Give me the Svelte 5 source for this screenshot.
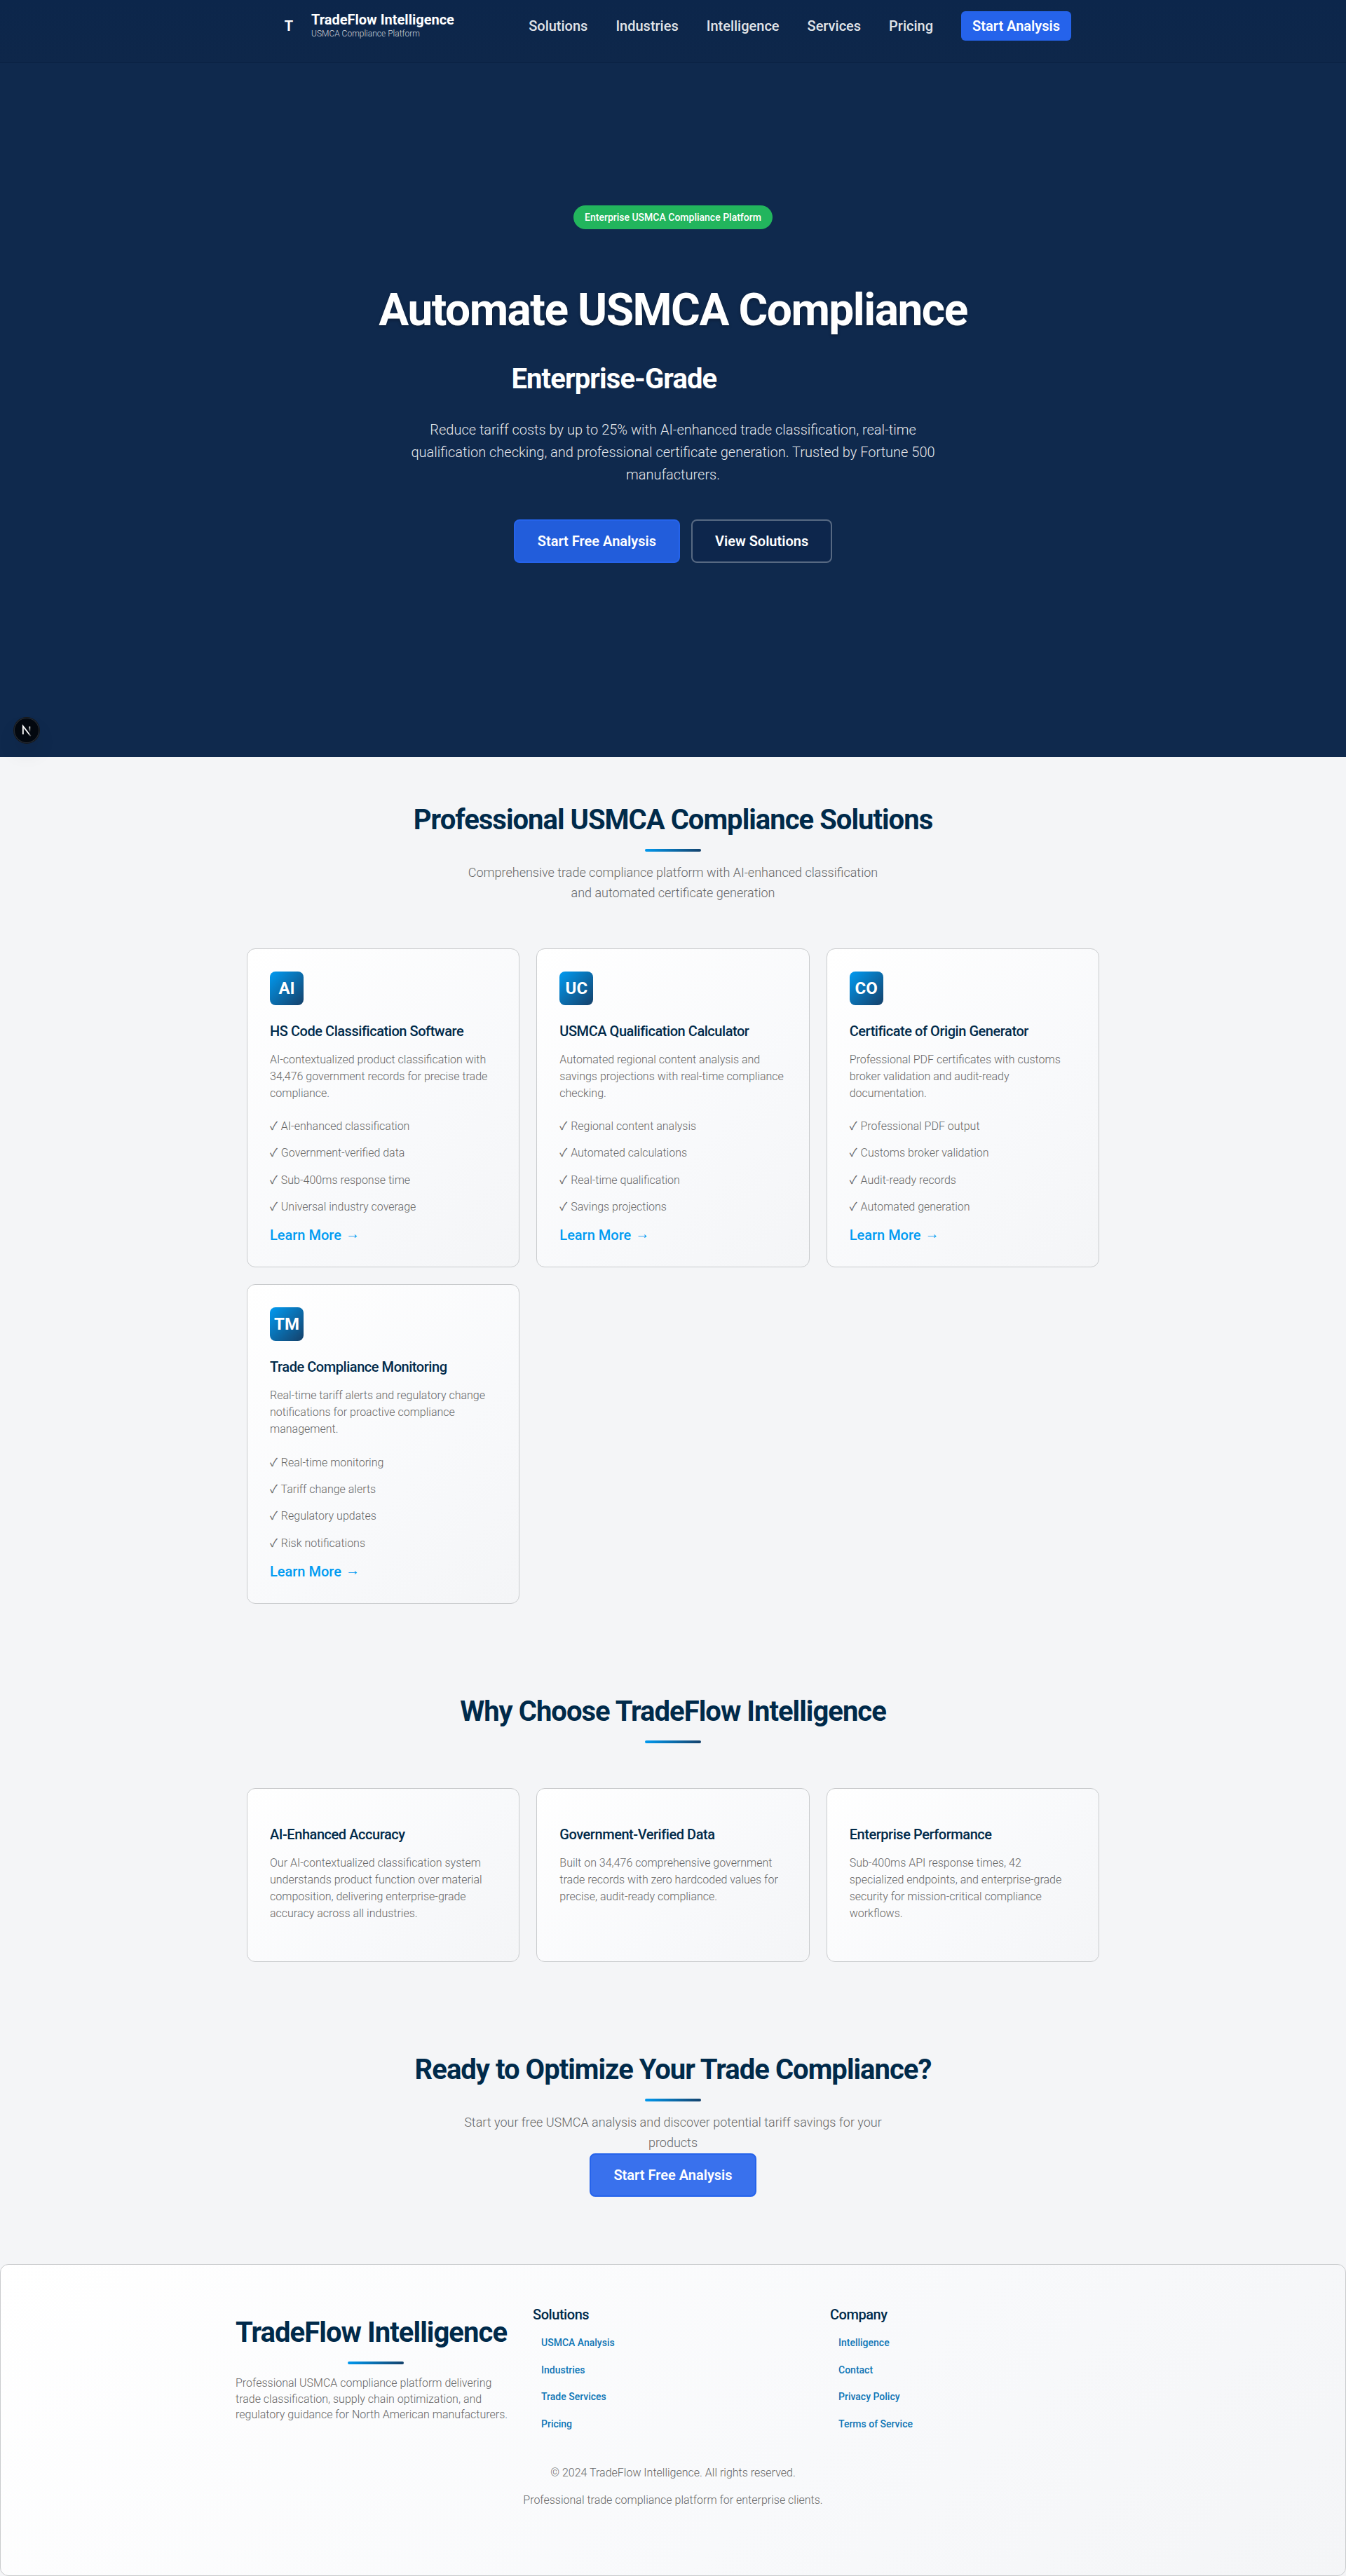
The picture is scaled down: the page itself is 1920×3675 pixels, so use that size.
<script>
  const nav = ['Solutions', 'Industries', 'Intelligence', 'Services', 'Pricing'];

  const solutions = [
    {
      icon: 'AI',
      title: 'HS Code Classification Software',
      text: 'AI-contextualized product classification with 34,476 government records for precise trade compliance.',
      items: ['AI-enhanced classification', 'Government-verified data', 'Sub-400ms response time', 'Universal industry coverage']
    },
    {
      icon: 'UC',
      title: 'USMCA Qualification Calculator',
      text: 'Automated regional content analysis and savings projections with real-time compliance checking.',
      items: ['Regional content analysis', 'Automated calculations', 'Real-time qualification', 'Savings projections']
    },
    {
      icon: 'CO',
      title: 'Certificate of Origin Generator',
      text: 'Professional PDF certificates with customs broker validation and audit-ready documentation.',
      items: ['Professional PDF output', 'Customs broker validation', 'Audit-ready records', 'Automated generation']
    },
    {
      icon: 'TM',
      title: 'Trade Compliance Monitoring',
      text: 'Real-time tariff alerts and regulatory change notifications for proactive compliance management.',
      items: ['Real-time monitoring', 'Tariff change alerts', 'Regulatory updates', 'Risk notifications']
    }
  ];

  const reasons = [
    {
      title: 'AI-Enhanced Accuracy',
      text: 'Our AI-contextualized classification system understands product function over material composition, delivering enterprise-grade accuracy across all industries.'
    },
    {
      title: 'Government-Verified Data',
      text: 'Built on 34,476 comprehensive government trade records with zero hardcoded values for precise, audit-ready compliance.'
    },
    {
      title: 'Enterprise Performance',
      text: 'Sub-400ms API response times, 42 specialized endpoints, and enterprise-grade security for mission-critical compliance workflows.'
    }
  ];

  const footerLinks = [
    { title: 'Solutions', links: ['USMCA Analysis', 'Industries', 'Trade Services', 'Pricing'] },
    { title: 'Company', links: ['Intelligence', 'Contact', 'Privacy Policy', 'Terms of Service'] }
  ];
</script>

<div class="page">
  <div class="top">
    <header class="header">
      <div class="header-inner">
        <a class="logo" href="#top">
          <span class="logo-mark">T</span>
          <span class="logo-text">
            <span class="logo-name">TradeFlow Intelligence</span>
            <span class="logo-sub">USMCA Compliance Platform</span>
          </span>
        </a>
        <nav class="nav">
          {#each nav as item}
            <a class="nav-link" href="#top">{item}</a>
          {/each}
          <a class="nav-cta" href="#top">Start Analysis</a>
        </nav>
      </div>
    </header>

    <section class="hero">
      <div class="badge">Enterprise USMCA Compliance Platform</div>
      <h1>Automate USMCA Compliance</h1>
      <h2 class="hero-sub">Enterprise-Grade</h2>
      <p>
        Reduce tariff costs by up to 25% with AI-enhanced trade classification, real-time qualification checking, and
        professional certificate generation. Trusted by Fortune 500 manufacturers.
      </p>
      <div class="actions">
        <a class="btn primary" href="#top">Start Free Analysis</a>
        <a class="btn outline" href="#top">View Solutions</a>
      </div>
    </section>

    <div class="dev-badge">
      <svg width="36" height="36" viewBox="0 0 36 36" fill="none">
        <defs>
          <linearGradient id="diag" gradientUnits="userSpaceOnUse" x1="9.96" y1="11.12" x2="15.48" y2="17.97">
            <stop stop-color="#fff" />
            <stop offset="0.6" stop-color="#fff" stop-opacity="0.2" />
            <stop offset="1" stop-color="#fff" stop-opacity="0" />
          </linearGradient>
          <linearGradient id="stem" gradientUnits="userSpaceOnUse" x1="11.82" y1="1.4" x2="11.79" y2="9.63">
            <stop stop-color="#fff" />
            <stop offset="1" stop-color="#fff" stop-opacity="0" />
          </linearGradient>
        </defs>
        <g transform="translate(10.5 11)" stroke-width="1.86">
          <path d="M13.3 15.2 L2.34 1 V12.6" stroke="url(#diag)" />
          <path d="M11.825 1.5 V13.1" stroke="url(#stem)" />
        </g>
      </svg>
    </div>
  </div>

  <section class="section">
    <h2 class="heading">Professional USMCA Compliance Solutions</h2>
    <p class="lead">Comprehensive trade compliance platform with AI-enhanced classification and automated certificate generation</p>
    <div class="grid">
      {#each solutions as s}
        <article class="card">
          <div class="icon">{s.icon}</div>
          <h3>{s.title}</h3>
          <p>{s.text}</p>
          <ul>
            {#each s.items as item}
              <li><span class="check">✓</span> {item}</li>
            {/each}
          </ul>
          <a class="more" href="#top">Learn More <span class="arrow">→</span></a>
        </article>
      {/each}
    </div>
  </section>

  <section class="section">
    <h2 class="heading">Why Choose TradeFlow Intelligence</h2>
    <div class="grid">
      {#each reasons as r}
        <article class="card plain">
          <h3>{r.title}</h3>
          <p>{r.text}</p>
        </article>
      {/each}
    </div>
  </section>

  <section class="section cta">
    <h2 class="heading">Ready to Optimize Your Trade Compliance?</h2>
    <p class="lead">Start your free USMCA analysis and discover potential tariff savings for your products</p>
    <a class="btn primary" href="#top">Start Free Analysis</a>
  </section>

  <footer class="footer">
    <div class="footer-grid">
      <div class="about">
        <h2 class="heading">TradeFlow Intelligence</h2>
        <p>
          Professional USMCA compliance platform delivering trade classification, supply chain optimization, and
          regulatory guidance for North American manufacturers.
        </p>
      </div>
      {#each footerLinks as col}
        <div class="links">
          <h4>{col.title}</h4>
          <ul>
            {#each col.links as link}
              <li><a href="#top">{link}</a></li>
            {/each}
          </ul>
        </div>
      {/each}
    </div>
    <div class="legal">
      <p>© 2024 TradeFlow Intelligence. All rights reserved.</p>
      <p>Professional trade compliance platform for enterprise clients.</p>
    </div>
  </footer>
</div>

<style>
  :global(body) {
    margin: 0;
    background: #f4f5f7;
  }

  .page {
    font-family: Roboto, sans-serif;
    font-weight: 300;
    font-size: 16px;
    color: #666;
  }

  .page :is(h1, h2, h3, h4, p, ul) {
    margin: 0;
    padding: 0;
  }

  ul {
    list-style: none;
  }

  a {
    text-decoration: none;
    color: inherit;
  }

  /* Header and hero */
  .top {
    position: relative;
    height: 1080px;
    background: #0f294d;
    color: #fff;
  }

  .header {
    box-sizing: border-box;
    height: 90px;
    padding-top: 16px;
    background: linear-gradient(#0c264b, #0e274a);
    border-bottom: 1px solid #0a2142;
    backdrop-filter: blur(10px);
  }

  .header-inner {
    width: 1136px;
    height: 42px;
    margin: 0 auto;
    display: flex;
    align-items: center;
    justify-content: space-between;
  }

  .logo {
    display: flex;
    align-items: center;
    gap: 12px;
  }

  .logo-mark {
    width: 40px;
    text-align: center;
    font-size: 20px;
    line-height: 26px;
    font-weight: 700;
  }

  .logo-text {
    display: flex;
    flex-direction: column;
    gap: 3px;
  }

  .logo-name {
    font-size: 20px;
    line-height: 20px;
    font-weight: 700;
  }

  .logo-sub {
    font-size: 12px;
    line-height: 14.4px;
    color: rgba(255, 255, 255, 0.8);
  }

  .nav {
    display: flex;
    align-items: center;
    gap: 40px;
    font-size: 20px;
    line-height: 26px;
  }

  .nav-link {
    font-weight: 500;
    color: rgba(255, 255, 255, 0.9);
  }

  .nav-cta {
    padding: 8px 16px;
    border-radius: 6px;
    background: #2563eb;
    font-weight: 600;
  }

  .hero {
    display: flex;
    flex-direction: column;
    align-items: center;
    padding-top: 203px;
    text-align: center;
  }

  .badge {
    padding: 8px 16px;
    border-radius: 20px;
    background: #22b55d;
    font-size: 14px;
    line-height: 18.2px;
    font-weight: 500;
  }

  .hero h1 {
    margin-top: 81px;
    font-size: 64px;
    line-height: 70px;
    font-weight: 700;
    letter-spacing: -1.5px;
    text-shadow: 0 2px 4px rgba(0, 0, 0, 0.3);
  }

  .hero .hero-sub {
    width: 461px;
    margin-top: 39px;
    text-align: left;
    font-size: 40px;
    line-height: 48px;
    font-weight: 700;
    letter-spacing: -0.9px;
  }

  .hero p {
    width: 768px;
    margin-top: 32px;
    font-size: 20px;
    line-height: 32px;
    color: rgba(255, 255, 255, 0.92);
  }

  .actions {
    display: flex;
    gap: 16px;
    margin-top: 48px;
  }

  .btn {
    display: inline-block;
    padding: 16px 32px;
    border: 2px solid #2563eb;
    border-radius: 8px;
    color: #fff;
    font-size: 20px;
    line-height: 26px;
    font-weight: 600;
  }

  .btn.primary {
    background: rgba(37, 99, 235, 0.9);
  }

  .btn.outline {
    border-color: rgba(255, 255, 255, 0.3);
    background: #0d264c;
    background-clip: padding-box;
  }

  .dev-badge {
    position: absolute;
    left: 20px;
    bottom: 20px;
    width: 36px;
    height: 36px;
    border-radius: 50%;
    background: rgba(0, 0, 0, 0.8);
    box-shadow:
      0 0 0 1px #171717,
      inset 0 0 0 1px rgba(255, 255, 255, 0.14),
      0 16px 32px -8px rgba(0, 0, 0, 0.24);
  }

  .dev-badge svg {
    display: block;
  }

  /* Sections */
  .section {
    width: 1216px;
    margin: 0 auto;
    padding: 64px 0;
  }

  .heading {
    font-size: 40px;
    line-height: 52px;
    font-weight: 700;
    letter-spacing: -0.98px;
    color: #002a4a;
    text-align: center;
  }

  .heading::after {
    content: '';
    display: block;
    width: 80px;
    height: 4px;
    margin: 15px auto 0;
    border-radius: 2px;
    background: linear-gradient(135deg, #009bf2, #154069);
  }

  .lead {
    width: 600px;
    font-size: 18px;
    line-height: 28.8px;
    text-align: center;
  }

  .section .lead {
    margin: 16px auto 0;
  }

  .grid {
    display: grid;
    grid-template-columns: repeat(3, 1fr);
    gap: 24px;
    margin-top: 64px;
  }

  .card {
    padding: 32px;
    border: 1px solid #c9cbcd;
    border-radius: 12px;
    background: linear-gradient(135deg, #fff 0%, #f8f9fb 60%, #f4f5f7 100%);
  }

  .icon {
    display: flex;
    align-items: center;
    justify-content: center;
    width: 48px;
    height: 48px;
    margin-bottom: 24px;
    border-radius: 8px;
    background: linear-gradient(135deg, #009bf2, #154069);
    color: #fff;
    font-size: 24px;
    font-weight: 700;
  }

  .card h3 {
    font-size: 20px;
    line-height: 26px;
    font-weight: 500;
    letter-spacing: -0.45px;
    color: #002a4a;
  }

  .card.plain h3 {
    margin-top: 20px;
  }

  .card p {
    margin: 16px 0 24px;
    line-height: 24px;
  }

  .card ul {
    padding-top: 0.4px;
    font-family: Roboto, 'Noto Sans CJK SC', sans-serif;
  }

  .card li {
    height: 22.4px;
    line-height: 22.4px;
    margin-bottom: 16px;
  }

  .check {
    margin-right: 1px;
    font-weight: 400;
  }

  .more {
    display: block;
    margin-top: -0.4px;
    font-size: 20px;
    line-height: 26px;
    font-weight: 500;
    color: #009bf2;
  }

  .arrow {
    margin-left: 1px;
    line-height: 0;
    vertical-align: 2px;
  }

  .cta {
    display: flex;
    flex-direction: column;
    align-items: center;
  }

  .cta .btn {
    margin-top: 0.8px;
  }

  /* Footer */
  .footer {
    box-sizing: border-box;
    height: 444.6px;
    margin-top: 32.2px;
    padding: 32px 0;
    border: 1px solid #c9cbcd;
    border-radius: 12px;
    background: linear-gradient(135deg, #fff 0%, #f8f9fb 60%, #f4f5f7 100%);
  }

  .footer-grid {
    display: grid;
    grid-template-columns: repeat(3, 400px);
    gap: 24px;
    justify-content: center;
  }

  .about {
    padding-top: 39px;
  }

  .about .heading {
    text-align: left;
    letter-spacing: -0.94px;
  }

  .about p {
    margin-top: 16px;
    line-height: 22.4px;
  }

  .links h4 {
    margin: 26px 0 16px;
    font-size: 20px;
    line-height: 26px;
    font-weight: 500;
    letter-spacing: -0.45px;
    color: #002a4a;
  }

  .links li {
    height: 22.4px;
    margin-bottom: 16.2px;
    padding-left: 12px;
    line-height: 22.4px;
  }

  .links a {
    font-size: 14px;
    font-weight: 500;
    color: #0f76b6;
  }

  .legal {
    margin-top: 31.5px;
    text-align: center;
  }

  .legal p {
    margin-bottom: 16px;
    line-height: 22.4px;
  }
</style>
